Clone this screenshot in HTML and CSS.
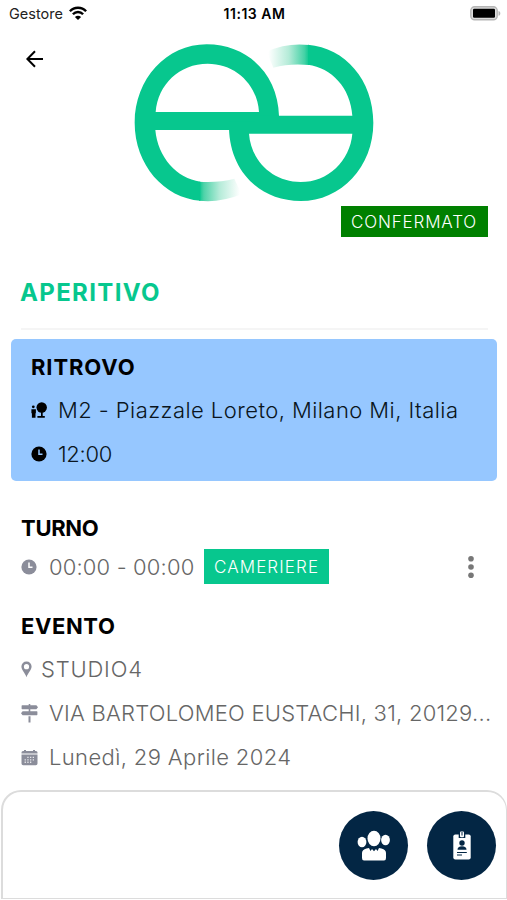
FILE: index.html
```html
<!DOCTYPE html>
<html lang="it">
<head>
<meta charset="utf-8">
<title>Aperitivo</title>
<link rel="stylesheet" href="styles.css">
</head>
<body>
<header class="status">
  <div class="carrier"><span class="carrier-name">Gestore</span>
    <svg width="18" height="14" viewBox="0 0 18 14"><g fill="none" stroke="#000" stroke-width="2.4"><path d="M.9 5.2C5.2.5 12.8.5 17.1 5.2"/><path d="M3.9 8.3c2.8-3 7.4-3 10.2 0"/></g><path d="M5.900 10.900q3.100-2.500 6.200 0L9 13.900z"/></svg>
  </div>
  <span class="time">11:13 AM</span>
  <svg class="battery" width="31" height="15" viewBox="0 0 31 15"><rect x=".8" y=".8" width="26.4" height="13" rx="3.8" fill="#ddd" stroke="#b5b5b5" stroke-width="1.4"/><rect x="3" y="2.8" width="22" height="9" rx="1.2"/><path d="M28.5 5c2.4.6 2.4 4.2 0 4.8z" fill="#b5b5b5"/></svg>
</header>
<section class="hero">
  <svg class="back" width="18" height="18" viewBox="0 0 18 18"><path d="M17 9H1.5M9 1.3 1.4 9 9 16.7" fill="none" stroke="#000" stroke-width="2"/></svg>
  <svg class="logo" width="260" height="175" viewBox="0 0 780 525">
    <defs>
      <linearGradient id="a" gradientUnits="userSpaceOnUse" x1="222" x2="345" y1="0" y2="0"><stop offset="0" stop-color="#07c78e"/><stop offset=".12" stop-color="#4fd3a9"/><stop offset=".5" stop-color="#b4ebd8"/><stop offset="1" stop-color="#fff"/></linearGradient>
      <linearGradient id="b" gradientUnits="userSpaceOnUse" x1="430" x2="553" y1="0" y2="0"><stop offset="0" stop-color="#fff"/><stop offset=".5" stop-color="#b4ebd8"/><stop offset=".88" stop-color="#45d2a6"/><stop offset="1" stop-color="#07c78e"/></linearGradient>
    </defs>
    <g fill="#07c78e">
      <path fill="url(#a)" d="M222 497Q285 504 350 478L328 431Q280 444 222 440z"/>
      <path fill="url(#b)" d="M553 30Q485 22 425 50L445 98Q495 84 553 90z"/>
      <path d="M462 250V243C459 120 370 28 245 28C125 28 29 132 29 263C29 390 118 489 226 497V440C155 430 98 366 91 285H330V270H462zM92 231C99 148 163 86 248 86C333 86 397 150 402 231z"/>
      <path d="M312 280C315 408 404 498 527 498C648 498 745 396 745 263C745 135 660 38 549 29V89C619 98 677 158 682 242H390V260H312zM682 296C675 378 609 441 527 441C443 441 378 378 372 296z"/>
    </g>
  </svg>
</section>
<div class="badge-row"><span class="badge confirmed"><span class="t-conf">CONFERMATO</span></span></div>
<h1><span class="t-title">APERITIVO</span></h1>
<hr>
<section class="meeting">
  <h2><span class="t-rit">RITROVO</span></h2>
  <div class="row">
    <svg width="16" height="16" viewBox="0 0 16 16"><circle cx="10.7" cy="5.5" r="5.2"/><path d="M10 9h1.7v5h2.1v1.7H6.4V14H10zM.4 7.3h4.5v4H4.5v4.4H.9v-4.4H.4z"/><circle cx="2.3" cy="4.8" r="1.4"/></svg>
    <span class="t-place">M2 - Piazzale Loreto, Milano Mi, Italia</span>
  </div>
  <div class="row">
    <svg width="16" height="16" viewBox="0 0 16 16"><circle cx="8" cy="8" r="7.6"/><path d="M8 3.5v4.8h3.5" fill="none" stroke="#96c7ff" stroke-width="1.5"/></svg>
    <span class="t-hour">12:00</span>
  </div>
</section>
<main class="details">
  <h2><span class="t-turno">TURNO</span></h2>
  <div class="shift">
    <svg width="16" height="16" viewBox="0 0 16 16"><circle cx="8" cy="8" r="7.6" fill="#8b8d9a"/><path d="M8 3.5v4.8h3.5" fill="none" stroke="#fff" stroke-width="1.5"/></svg>
    <span class="t-shift">00:00 - 00:00</span>
    <span class="badge role"><span class="t-role">CAMERIERE</span></span>
    <svg class="more" width="6" height="24" viewBox="0 0 6 24" fill="#777"><circle cx="3" cy="3.7" r="2.8"/><circle cx="3" cy="12" r="2.8"/><circle cx="3" cy="20.3" r="2.8"/></svg>
  </div>
  <h2 class="event"><span class="t-event">EVENTO</span></h2>
  <div class="row">
    <svg class="pin" width="11" height="17" viewBox="0 0 11 17"><path fill="#8b8d9a" fill-rule="evenodd" d="M5.5.5A5 5 0 0 0 .4 5.6C.4 9 4 12 5.5 16.2 7 12 10.6 9 10.6 5.6A5 5 0 0 0 5.5.5zm0 2.6a2.6 2.6 0 1 1 0 5.2 2.6 2.6 0 0 1 0-5.2z"/></svg>
    <span class="t-studio">STUDIO4</span>
  </div>
  <div class="row">
    <svg width="17" height="19" viewBox="0 0 17 19" fill="#8b8d9a"><path d="M7.700 0h1.600v1.200h6.100L17 3.200 15.400 5.200H1.200Q.6 5.200.6 4.600V1.800q0-.6.6-.6h6.500zM7.700 5h1.600v2.200h6.500q.6 0 .6.600v2.800q0 .6-.6.600H1.600L0 9.200l1.600-2h6.100zM7.500 12.200h2v6.200h-2z"/></svg>
    <span class="t-via">VIA BARTOLOMEO EUSTACHI, 31, 20129...</span>
  </div>
  <div class="row">
    <svg width="17" height="17" viewBox="0 0 17 17"><path fill="#8b8d9a" d="M3 1h2v1h7V1h2v1h1q1.500 0 1.500 1.600V4.500H.5V3.600Q.5 2 2 2h1zM.5 5.400h16v9.100q0 1.700-1.700 1.700H2.200Q.5 16.200.5 14.500z"/><g fill="#e8e8ec"><path d="M6.300 7.700h1.300V9H6.300zM9 7.700h1.300V9H9zM11.700 7.700h1.300V9h-1.300zM3.600 10.200h1.300v1.300H3.600zM6.300 10.200h1.300v1.300H6.300zM9 10.200h1.300v1.300H9zM11.700 10.200h1.300v1.300h-1.300zM3.600 12.600h1.300v1.300H3.600zM6.300 12.600h1.300v1.300H6.300zM9 12.600h1.300v1.300H9z"/></g></svg>
    <span class="t-date">Lunedì, 29 Aprile 2024</span>
  </div>
</main>
<footer class="dock">
  <span class="fab"><svg width="34" height="32" viewBox="0 0 34 32" fill="#fff"><ellipse cx="17" cy="8.500" rx="6.500" ry="7.800"/><ellipse cx="5" cy="12" rx="4.400" ry="5.300"/><ellipse cx="28.500" cy="10" rx="4.400" ry="5.200"/><path d="M5 28V23q0-3.500 4.500-4.500l2.500-.5 1.500 3 1.500-2 2 2.300 2-2.300 1.500 2 1.500-3 2.500.5Q29 19.500 29 23v5q0 2.500-2 2.500H7q-2 0-2-2.500z"/></svg></span>
  <span class="fab"><svg width="18" height="30" viewBox="0 0 18 30"><rect x=".3" y="3.500" width="17.400" height="25" rx="2" fill="#fff"/><path fill="#032644" d="M5.700 2.800h6.600V7H5.700zM4.500 18.700q0-3.500 4.500-3.500t4.500 3.500zM4 21h9.800v1H4zM4 23.400h5v1H4z"/><circle cx="9" cy="12" r="2.700" fill="#032644"/><rect x="7" y=".5" width="4" height="5.700" rx="1" fill="#fff"/><path d="M9 1v3.500" stroke="#032644" stroke-width="1"/></svg></span>
</footer>
</body>
</html>
```
FILE: styles.css
```css
* { box-sizing: border-box; }
body {
  margin: 0;
  width: 507px;
  height: 900px;
  display: flex;
  flex-direction: column;
  overflow: hidden;
  background: #fff;
  font-family: Inter, "Liberation Sans", sans-serif;
  font-size: 22px;
  font-weight: 340;
  color: #000;
  white-space: nowrap;
}
svg { display: block; flex: none; }
h1, h2 { margin: 0; font-weight: 700; }
.status {
  height: 35px;
  padding: 0 6px 8px 9px;
  display: grid;
  grid-template-columns: 1fr auto 1fr;
  align-items: center;
}
.carrier { display: flex; align-items: center; gap: 6px; font-size: 14.5px; font-weight: 400; color: #222; }
.carrier svg { margin-top: -2px; }
.time { font-size: 14px; font-weight: 600; letter-spacing: .5px; margin-right: 1px; }
.battery { justify-self: end; }
.hero { height: 171px; display: flex; align-items: flex-start; }
.back { margin: 15px 0 0 26px; }
.logo { margin-left: 81px; }
.badge-row { display: flex; justify-content: flex-end; padding-right: 19px; }
.badge { display: flex; align-items: center; color: #fff; font-size: 17px; padding-left: 10px; }
.confirmed { width: 147px; height: 31px; background: #008000; }
h1 { margin-top: 39px; padding-left: 20px; height: 34px; line-height: 34px; font-size: 24px; color: #07c78e; }
hr { width: 467px; height: 2px; margin: 18px 0 9px 21px; border: 0; background: #f5f5f5; }
.meeting { width: 486px; height: 142px; margin-left: 11px; padding: 6px 20px; border-radius: 5px; background: #96c7ff; }
h2 { height: 44px; line-height: 44px; font-size: 22px; }
.meeting .row { color: #0a1520; }
.row { display: flex; align-items: center; height: 44px; gap: 11px; }
.meeting h2 { height: 43px; }
.meeting .row svg { margin-top: -1px; }
.details { flex: none; height: 309px; padding: 25px 16px 0 21px; color: #666; }
.details h2 { color: #000; }
.shift { height: 35px; margin-top: -1px; display: flex; align-items: center; }
.shift > svg:first-child { margin-right: 12px; }
.role { width: 125px; height: 35px; margin-left: auto; background: #07c78e; }
.more { margin-left: 139px; margin-right: 17px; }
.details .event { margin-top: 20px; }
.details .row { position: relative; top: -1px; }
.pin { margin-right: -2px; }
.dock {
  flex: 1;
  margin: 0 0 1px 1px;
  padding: 19px 10px 0 0;
  display: flex;
  justify-content: flex-end;
  gap: 19px;
  border: 2px solid #dcdcdc;
  border-right-width: 1px;
  border-bottom-width: 1px;
  border-radius: 20px 20px 0 0;
}
.fab { width: 69px; height: 69px; border-radius: 50%; background: #032644; display: flex; align-items: center; justify-content: center; }
.t-conf { letter-spacing: .85px; }
.t-title { letter-spacing: 1.350px; }
.t-place { letter-spacing: .44px; }
.t-rit { letter-spacing: .9px; }
.t-hour { letter-spacing: -.3px; }
.t-turno { letter-spacing: -.3px; }
.t-shift { letter-spacing: .15px; }
.t-role { letter-spacing: 1.100px; }
.t-event { letter-spacing: .6px; }
.t-studio { letter-spacing: .8px; }
.t-via { letter-spacing: .23px; }
.t-date { letter-spacing: .37px; }
```
